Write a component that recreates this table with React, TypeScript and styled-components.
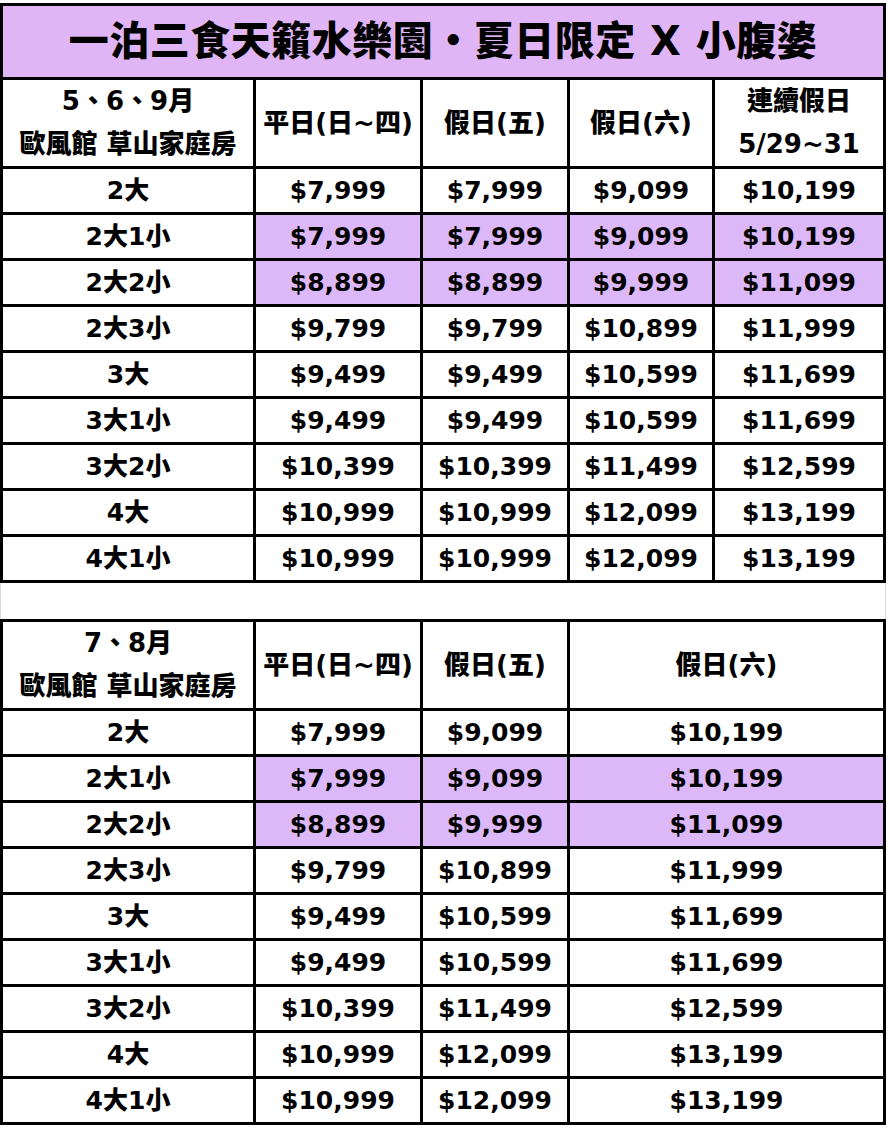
import React from "react";
import styled, { createGlobalStyle } from "styled-components";

const GlobalStyle = createGlobalStyle`
	html, body {
		margin: 0;
		padding: 0;
		background: #ffffff;
	}
	body {
		font-family: "DejaVu Sans", "Noto Sans CJK TC", sans-serif;
		color: #000000;
	}
`;

type Row = { label: string; prices: string[]; hl?: boolean };

const springRows: Row[] = [
	{ label: "2大", prices: ["$7,999", "$7,999", "$9,099", "$10,199"] },
	{ label: "2大1小", prices: ["$7,999", "$7,999", "$9,099", "$10,199"], hl: true },
	{ label: "2大2小", prices: ["$8,899", "$8,899", "$9,999", "$11,099"], hl: true },
	{ label: "2大3小", prices: ["$9,799", "$9,799", "$10,899", "$11,999"] },
	{ label: "3大", prices: ["$9,499", "$9,499", "$10,599", "$11,699"] },
	{ label: "3大1小", prices: ["$9,499", "$9,499", "$10,599", "$11,699"] },
	{ label: "3大2小", prices: ["$10,399", "$10,399", "$11,499", "$12,599"] },
	{ label: "4大", prices: ["$10,999", "$10,999", "$12,099", "$13,199"] },
	{ label: "4大1小", prices: ["$10,999", "$10,999", "$12,099", "$13,199"] },
];

const summerRows: Row[] = [
	{ label: "2大", prices: ["$7,999", "$9,099", "$10,199"] },
	{ label: "2大1小", prices: ["$7,999", "$9,099", "$10,199"], hl: true },
	{ label: "2大2小", prices: ["$8,899", "$9,999", "$11,099"], hl: true },
	{ label: "2大3小", prices: ["$9,799", "$10,899", "$11,999"] },
	{ label: "3大", prices: ["$9,499", "$10,599", "$11,699"] },
	{ label: "3大1小", prices: ["$9,499", "$10,599", "$11,699"] },
	{ label: "3大2小", prices: ["$10,399", "$11,499", "$12,599"] },
	{ label: "4大", prices: ["$10,999", "$12,099", "$13,199"] },
	{ label: "4大1小", prices: ["$10,999", "$12,099", "$13,199"] },
];

function App() {
	return (
		<Page>
			<GlobalStyle />
			<PriceTable>
				<colgroup>
					<col style={{ width: 253 }} />
					<col style={{ width: 167 }} />
					<col style={{ width: 147 }} />
					<col style={{ width: 145 }} />
					<col style={{ width: 171 }} />
				</colgroup>
				<tbody>
					<tr>
						<TitleCell colSpan={5}>
							一泊三食天籟水樂園・夏日限定 X 小腹婆
						</TitleCell>
					</tr>
					<tr>
						<HeadCell>
							5、6、9月
							<br />
							歐風館 草山家庭房
						</HeadCell>
						<HeadCell>平日(日~四)</HeadCell>
						<HeadCell>假日(五)</HeadCell>
						<HeadCell>假日(六)</HeadCell>
						<HeadCell>
							連續假日
							<br />
							5/29~31
						</HeadCell>
					</tr>
					{springRows.map((row) => (
						<tr key={row.label}>
							<BodyCell>{row.label}</BodyCell>
							{row.prices.map((p, i) => (
								<BodyCell key={i} $hl={row.hl}>
									{p}
								</BodyCell>
							))}
						</tr>
					))}
				</tbody>
			</PriceTable>

			<Spacer />

			<PriceTable>
				<colgroup>
					<col style={{ width: 253 }} />
					<col style={{ width: 167 }} />
					<col style={{ width: 147 }} />
					<col style={{ width: 316 }} />
				</colgroup>
				<tbody>
					<tr>
						<HeadCell>
							7、8月
							<br />
							歐風館 草山家庭房
						</HeadCell>
						<HeadCell>平日(日~四)</HeadCell>
						<HeadCell>假日(五)</HeadCell>
						<HeadCell>假日(六)</HeadCell>
					</tr>
					{summerRows.map((row) => (
						<tr key={row.label}>
							<BodyCell>{row.label}</BodyCell>
							{row.prices.map((p, i) => (
								<BodyCell key={i} $hl={row.hl}>
									{p}
								</BodyCell>
							))}
						</tr>
					))}
				</tbody>
			</PriceTable>
		</Page>
	);
}

const Page = styled.div`
	width: 890px;
	padding-top: 3px;
`;

const PriceTable = styled.table`
	border-collapse: collapse;
	table-layout: fixed;
	width: 886px;
	border: 3px solid #000;

	td {
		border: 3px solid #000;
		padding: 0;
		text-align: center;
		vertical-align: middle;
		font-weight: 900;
	}
`;

const TitleCell = styled.td`
	background: #dfb5f6;
	height: 71px;
	font-size: 40px;
	line-height: 71px;
	letter-spacing: 0.5px;
	white-space: nowrap;
`;

const HeadCell = styled.td`
	height: 86px;
	font-size: 26px;
	line-height: 43px;
	white-space: nowrap;
`;

const BodyCell = styled.td<{ $hl?: boolean }>`
	height: 43px;
	font-size: 25px;
	line-height: 43px;
	white-space: nowrap;
	background: ${({ $hl }) => ($hl ? "#dcb8f8" : "#ffffff")};
`;

const Spacer = styled.div`
	height: 36px;
	width: 886px;
	border-left: 1px solid #dadada;
	border-right: 1px solid #dadada;
	box-sizing: border-box;
`;

export default App;
